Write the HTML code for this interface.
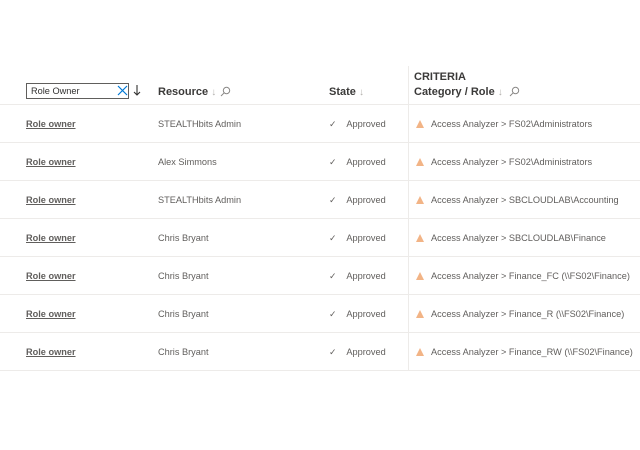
<!DOCTYPE html>
<html><head><style>
body{margin:0;width:640px;height:450px;background:#fff;font-family:"Segoe UI","Liberation Sans",sans-serif;position:relative;overflow:hidden;color:#323130}
.a{position:absolute;white-space:nowrap}
.h{font-size:11px;font-weight:bold;color:#3b3a39}
.c{font-size:9.2px;color:#605e5c}
.l{font-size:9.2px;font-weight:bold;color:#605e5c;text-decoration:underline}
.line{position:absolute;left:0;width:640px;height:1px;background:#edebe9}
.ar{color:#b3b0ad;font-size:10px;font-weight:normal}
.tri{position:absolute;width:0;height:0;border-left:4.5px solid transparent;border-right:4.5px solid transparent;border-bottom:8px solid #f2b486}
</style></head><body>
<div class="a" style="left:408px;top:66px;width:1px;height:304px;background:#edebe9"></div>
<div class="a" style="left:26px;top:83px;width:103px;height:16px;border:1px solid #605e5c;box-sizing:border-box;font-size:9.2px;line-height:14px;padding-left:4px;color:#323130">Role Owner</div>
<svg class="a" style="left:117px;top:85px" width="11" height="11"><path d="M1 1L10 10M10 1L1 10" stroke="#0078d4" stroke-width="1.2"/></svg>
<svg class="a" style="left:133px;top:84px" width="8" height="13"><path d="M4 1V11M1 8L4 11L7 8" stroke="#323130" fill="none" stroke-width="1.1"/></svg>
<div class="a h" style="left:158px;top:86px">Resource <span class="ar">↓</span></div>
<svg class="a" style="left:220px;top:86px" width="11" height="11"><circle cx="6.5" cy="4.5" r="3.2" stroke="#8a8886" fill="none"/><path d="M4.2 6.8L1 10" stroke="#8a8886"/></svg>
<div class="a h" style="left:329px;top:86px">State <span class="ar">↓</span></div>
<div class="a h" style="left:414px;top:71px">CRITERIA</div>
<div class="a h" style="left:414px;top:86px">Category / Role <span class="ar">↓</span></div>
<svg class="a" style="left:509px;top:86px" width="11" height="11"><circle cx="6.5" cy="4.5" r="3.2" stroke="#8a8886" fill="none"/><path d="M4.2 6.8L1 10" stroke="#8a8886"/></svg>
<div class="line" style="top:104px"></div>
<div class="a l" style="left:26px;top:119px">Role owner</div><div class="a c" style="left:158px;top:119px">STEALTHbits Admin</div>
<div class="a l" style="left:26px;top:157px">Role owner</div><div class="a c" style="left:158px;top:157px">Alex Simmons</div>
<div class="a l" style="left:26px;top:195px">Role owner</div><div class="a c" style="left:158px;top:195px">STEALTHbits Admin</div>
<div class="a l" style="left:26px;top:233px">Role owner</div><div class="a c" style="left:158px;top:233px">Chris Bryant</div>
<div class="a l" style="left:26px;top:271px">Role owner</div><div class="a c" style="left:158px;top:271px">Chris Bryant</div>
<div class="a l" style="left:26px;top:309px">Role owner</div><div class="a c" style="left:158px;top:309px">Chris Bryant</div>
<div class="a l" style="left:26px;top:347px">Role owner</div><div class="a c" style="left:158px;top:347px">Chris Bryant</div>

<div class="a c" style="left:329px;top:119px">✓&nbsp;&nbsp;&nbsp; Approved</div>
<div class="a c" style="left:329px;top:157px">✓&nbsp;&nbsp;&nbsp; Approved</div>
<div class="a c" style="left:329px;top:195px">✓&nbsp;&nbsp;&nbsp; Approved</div>
<div class="a c" style="left:329px;top:233px">✓&nbsp;&nbsp;&nbsp; Approved</div>
<div class="a c" style="left:329px;top:271px">✓&nbsp;&nbsp;&nbsp; Approved</div>
<div class="a c" style="left:329px;top:309px">✓&nbsp;&nbsp;&nbsp; Approved</div>
<div class="a c" style="left:329px;top:347px">✓&nbsp;&nbsp;&nbsp; Approved</div>

<div class="tri" style="left:416px;top:120px"></div><div class="a c" style="left:431px;top:119px">Access Analyzer &gt; FS02\Administrators</div>
<div class="tri" style="left:416px;top:158px"></div><div class="a c" style="left:431px;top:157px">Access Analyzer &gt; FS02\Administrators</div>
<div class="tri" style="left:416px;top:196px"></div><div class="a c" style="left:431px;top:195px">Access Analyzer &gt; SBCLOUDLAB\Accounting</div>
<div class="tri" style="left:416px;top:234px"></div><div class="a c" style="left:431px;top:233px">Access Analyzer &gt; SBCLOUDLAB\Finance</div>
<div class="tri" style="left:416px;top:272px"></div><div class="a c" style="left:431px;top:271px">Access Analyzer &gt; Finance_FC (\\FS02\Finance)</div>
<div class="tri" style="left:416px;top:310px"></div><div class="a c" style="left:431px;top:309px">Access Analyzer &gt; Finance_R (\\FS02\Finance)</div>
<div class="tri" style="left:416px;top:348px"></div><div class="a c" style="left:431px;top:347px">Access Analyzer &gt; Finance_RW (\\FS02\Finance)</div>

<div class="line" style="top:142px"></div>
<div class="line" style="top:180px"></div>
<div class="line" style="top:218px"></div>
<div class="line" style="top:256px"></div>
<div class="line" style="top:294px"></div>
<div class="line" style="top:332px"></div>
<div class="line" style="top:370px"></div>
</body></html>
